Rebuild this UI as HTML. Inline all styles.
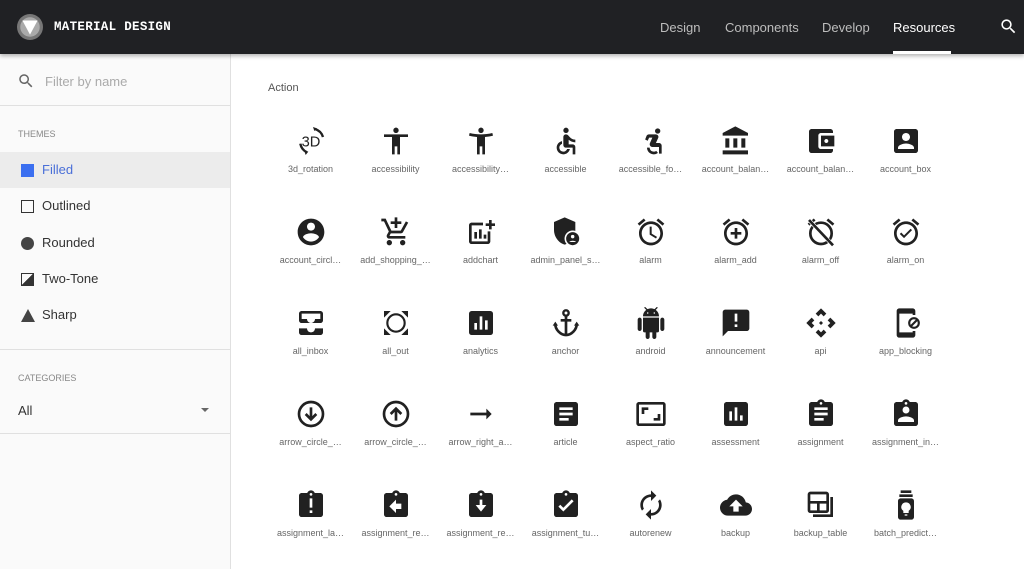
<!DOCTYPE html>
<html><head><meta charset="utf-8"><style>
*{margin:0;padding:0;box-sizing:border-box}
body{width:1024px;height:569px;overflow:hidden;background:#fff;font-family:"Liberation Sans",sans-serif;position:relative}
.hdr{position:absolute;left:0;top:0;width:1024px;height:54px;background:#202124;box-shadow:0 2px 4px rgba(0,0,0,.3);z-index:2}
.logo{position:absolute;left:17px;top:14px;width:26px;height:26px;border-radius:50%;background:#777}
.brand{position:absolute;left:54px;top:20px;color:#fff;font:bold 12.5px "Liberation Mono",monospace;letter-spacing:.3px}
.nav{position:absolute;top:20px;color:#bdbdbd;font-size:13px}
.side{position:absolute;left:0;top:54px;width:231px;height:515px;background:#fafafa;border-right:1px solid #e0e0e0}
.hr{position:absolute;left:0;width:230px;height:1px;background:#e0e0e0}
.sm{position:absolute;left:18px;font-size:9px;color:#888}
.it{position:absolute;left:0;width:230px;height:36px;font-size:13px;color:#333}
.it span{position:absolute;left:42px;top:10px}
.it i{position:absolute;left:21px;top:12px;width:13px;height:13px}
.cell{position:absolute;width:85px;text-align:center}
.cell svg{width:32px;height:32px;display:block;margin:0 auto}
.cell div{font-size:9px;color:#666;margin-top:7px;white-space:nowrap}
</style></head><body>
<div class="hdr">
<div class="logo"><svg width="26" height="26" viewBox="0 0 24 24"><circle cx="12" cy="12" r="9" fill="#aaa"/><path d="M5 6h14l-7 13z" fill="#fff"/></svg></div>
<div class="brand">MATERIAL DESIGN</div>
<div class="nav" style="left:660px">Design</div>
<div class="nav" style="left:725px">Components</div>
<div class="nav" style="left:822px">Develop</div>
<div class="nav" style="left:893px;color:#fff">Resources</div>
<div style="position:absolute;left:893px;top:51px;width:58px;height:3px;background:#fff"></div>
<svg style="position:absolute;left:999px;top:17px" width="19" height="19" viewBox="0 0 24 24"><path fill="#fff" d="M15.5 14h-.79l-.28-.27C15.41 12.59 16 11.11 16 9.5 16 5.91 13.09 3 9.5 3S3 5.91 3 9.5 5.91 16 9.5 16c1.61 0 3.090-.59 4.23-1.57l.27.28v.79l5 4.99L20.49 19l-4.99-5zm-6 0C7.01 14 5 11.99 5 9.5S7.01 5 9.5 5 14 7.01 14 9.5 11.99 14 9.5 14z"/></svg>
</div>
<div class="side">
<svg style="position:absolute;left:17px;top:18px" width="18" height="18" viewBox="0 0 24 24"><path fill="#666" d="M15.5 14h-.79l-.28-.27C15.41 12.59 16 11.11 16 9.5 16 5.91 13.09 3 9.5 3S3 5.91 3 9.5 5.91 16 9.5 16c1.61 0 3.09-.59 4.23-1.57l.27.28v.79l5 4.99L20.49 19l-4.99-5zm-6 0C7.01 14 5 11.99 5 9.5S7.01 5 9.5 5 14 7.01 14 9.5 11.99 14 9.5 14z"/></svg>
<div style="position:absolute;left:45px;top:20px;font-size:13px;color:#aaa">Filter by name</div>
<div class="hr" style="top:51px"></div>
<div class="sm" style="top:75px">THEMES</div>
<div class="it" style="top:98px;background:#ececec;color:#4a6fd8"><i style="background:#3b6ff0"></i><span>Filled</span></div>
<div class="it" style="top:134px"><i style="border:1.5px solid #333"></i><span>Outlined</span></div>
<div class="it" style="top:171px"><i style="background:#444;border-radius:50%"></i><span>Rounded</span></div>
<div class="it" style="top:207px"><i style="border:1.5px solid #333;background:linear-gradient(135deg,transparent 50%,#333 50%)"></i><span>Two-Tone</span></div>
<div class="it" style="top:243px"><i style="width:0;height:0;border-left:7px solid transparent;border-right:7px solid transparent;border-bottom:13px solid #444"></i><span>Sharp</span></div>
<div class="hr" style="top:295px"></div>
<div class="sm" style="top:319px">CATEGORIES</div>
<div style="position:absolute;left:18px;top:349px;font-size:13px;color:#333">All</div>
<div style="position:absolute;left:201px;top:354px;border-left:4px solid transparent;border-right:4px solid transparent;border-top:4px solid #666"></div>
<div class="hr" style="top:379px"></div>
</div>
<div style="position:absolute;left:268px;top:82px;font-size:11px;color:#555">Action</div>

<div class="cell" style="left:268px;top:125px"><svg viewBox="0 0 24 24"><path d="M15 3a9 9 0 0 1 6 6M4 14a9 9 0 0 0 5 6.5" fill="none" stroke="#212121" stroke-width="1.8"/><path d="M13.5 1.5l3 1-2 2zM8 22.5l2-2.5-3-.5z" fill="#212121"/><text x="12" y="16" font-size="11" text-anchor="middle" font-family="Liberation Sans" fill="#212121">3D</text></svg><div>3d_rotation</div></div>
<div class="cell" style="left:353px;top:125px"><svg viewBox="0 0 24 24"><path fill="#212121" d="M12 2c1.1 0 2 .9 2 2s-.9 2-2 2-2-.9-2-2 .9-2 2-2zm9 7h-6v13h-2v-6h-2v6H9V9H3V7h18v2z"/></svg><div>accessibility</div></div>
<div class="cell" style="left:438px;top:125px"><svg viewBox="0 0 24 24"><path fill="#212121" d="M20.5 6c-2.61.7-5.67 1-8.5 1s-5.890-.3-8.5-1L3 8c1.86.5 4 .83 6 1v13h2v-6h2v6h2V9c2-.17 4.14-.5 6-1l-.5-2zM12 6c1.1 0 2-.9 2-2s-.9-2-2-2-2 .9-2 2 .9 2 2 2z"/></svg><div>accessibility…</div></div>
<div class="cell" style="left:523px;top:125px"><svg viewBox="0 0 24 24"><circle cx="12" cy="4" r="2" fill="#212121"/><path fill="#212121" d="M19 13v-2c-1.54.02-3.09-.75-4.07-1.83l-1.29-1.43c-.17-.19-.38-.34-.61-.45H13c-.35-.2-.75-.3-1.19-.26C10.76 7.11 10 8.04 10 9.09V15c0 1.1.9 2 2 2h5v5h2v-5.5c0-1.1-.9-2-2-2h-3v-3.45c1.290 1.07 3.25 1.94 5 1.95zm-6.17 5c-.41 1.16-1.52 2-2.83 2-1.66 0-3-1.34-3-3 0-1.31.84-2.41 2-2.83V12.1c-2.28.46-4 2.48-4 4.9 0 2.76 2.24 5 5 5 2.42 0 4.44-1.72 4.9-4h-2.070z"/></svg><div>accessible</div></div>
<div class="cell" style="left:608px;top:125px"><svg viewBox="0 0 24 24"><circle cx="17" cy="4.5" r="2" fill="#212121"/><path fill="#212121" d="M14 20c-1.66 0-3-1.34-3-3h-2c0 2.76 2.24 5 5 5 1.2 0 2.3-.4 3.2-1.1l-1.3-1.5c-.5.4-1.2.6-1.9.6zM19 13.5h-3.3l1.7-3.8c.6-1.3-.4-2.7-1.8-2.7H10.5c-.8 0-1.5.4-1.8 1.1L7.6 10.9l1.9.9 1.1-2.3H13l-1.8 4.1c-.6 1.3.4 2.9 1.8 2.9h5v5h2v-6c0-1.1-.9-2-2-2z"/></svg><div>accessible_fo…</div></div>
<div class="cell" style="left:693px;top:125px"><svg viewBox="0 0 24 24"><path fill="#212121" d="M4 10v7h3v-7H4zm6 0v7h3v-7h-3zM2 22h19v-3H2v3zm14-12v7h3v-7h-3zm-4.5-9L2 6v2h19V6l-9.5-5z"/></svg><div>account_balan…</div></div>
<div class="cell" style="left:778px;top:125px"><svg viewBox="0 0 24 24"><path fill="#212121" d="M21 18v1c0 1.1-.9 2-2 2H5c-1.11 0-2-.9-2-2V5c0-1.1.89-2 2-2h14c1.1 0 2 .9 2 2v1h-9c-1.11 0-2 .9-2 2v8c0 1.1.89 2 2 2h9zm-9-2h10V8H12v8zm4-2.5c-.83 0-1.5-.67-1.5-1.5s.67-1.5 1.5-1.5 1.5.67 1.5 1.5-.67 1.5-1.5 1.5z"/></svg><div>account_balan…</div></div>
<div class="cell" style="left:863px;top:125px"><svg viewBox="0 0 24 24"><path fill="#212121" d="M3 5v14c0 1.1.89 2 2 2h14c1.1 0 2-.9 2-2V5c0-1.1-.9-2-2-2H5c-1.11 0-2 .9-2 2zm12 4c0 1.66-1.34 3-3 3s-3-1.34-3-3 1.34-3 3-3 3 1.34 3 3zm-9 8c0-2 4-3.1 6-3.1s6 1.1 6 3.1v1H6v-1z"/></svg><div>account_box</div></div>

<div class="cell" style="left:268px;top:216px"><svg viewBox="0 0 24 24"><path fill="#212121" d="M12 2C6.48 2 2 6.48 2 12s4.48 10 10 10 10-4.48 10-10S17.52 2 12 2zm0 3c1.66 0 3 1.34 3 3s-1.34 3-3 3-3-1.34-3-3 1.34-3 3-3zm0 14.2c-2.5 0-4.71-1.28-6-3.22.03-1.99 4-3.08 6-3.08 1.99 0 5.97 1.09 6 3.08-1.29 1.94-3.5 3.22-6 3.22z"/></svg><div>account_circl…</div></div>
<div class="cell" style="left:353px;top:216px"><svg viewBox="0 0 24 24"><path fill="#212121" d="M11 9h2V6h3V4h-3V1h-2v3H8v2h3v3zm-4 9c-1.1 0-1.99.9-1.99 2S5.9 22 7 22s2-.9 2-2-.9-2-2-2zm10 0c-1.1 0-1.99.9-1.99 2s.89 2 1.99 2 2-.9 2-2-.9-2-2-2zm-9.83-3.25l.03-.12.9-1.63h7.45c.75 0 1.41-.41 1.75-1.03l3.86-7.01L19.42 4h-.01l-1.1 2-2.76 5H8.53l-.13-.27L6.16 6l-.95-2-.94-2H1v2h2l3.6 7.59-1.35 2.45c-.16.28-.25.61-.25.96 0 1.1.9 2 2 2h12v-2H7.42c-.13 0-.25-.11-.25-.25z"/></svg><div>add_shopping_…</div></div>
<div class="cell" style="left:438px;top:216px"><svg viewBox="0 0 24 24"><path fill="#212121" d="M18 3h2v2.5h2.5v2H20V10h-2V7.5h-2.5v-2H18zM17 19H5V7h8.5V5H5c-1.1 0-2 .9-2 2v12c0 1.1.9 2 2 2h12c1.1 0 2-.9 2-2v-7.5h-2V19zM7 17h2v-5H7v5zm3.5 0h2V10h-2v7zm3.5 0h2v-3h-2v3z"/></svg><div>addchart</div></div>
<div class="cell" style="left:523px;top:216px"><svg viewBox="0 0 24 24"><path fill="#212121" d="M11 1L3 4.5v6c0 5 3.4 9.7 8 11 4.6-1.3 8-6 8-11v-6z"/><circle cx="17" cy="17" r="5.5" fill="#212121" stroke="#fff" stroke-width="1.2"/><circle cx="17" cy="15.5" r="1.3" fill="#fff"/><path d="M14.5 19.5c.5-1.3 4.5-1.3 5 0z" fill="#fff"/></svg><div>admin_panel_s…</div></div>
<div class="cell" style="left:608px;top:216px"><svg viewBox="0 0 24 24"><path fill="#212121" d="M22 5.72l-4.6-3.86-1.29 1.53 4.6 3.86L22 5.72zM7.88 3.39L6.6 1.86 2 5.71l1.29 1.53 4.59-3.85zM12.5 8H11v6l4.75 2.85.75-1.23-4-2.37V8zM12 4c-4.97 0-9 4.03-9 9s4.02 9 9 9c4.97 0 9-4.03 9-9s-4.03-9-9-9zm0 16c-3.87 0-7-3.13-7-7s3.13-7 7-7 7 3.13 7 7-3.13 7-7 7z"/></svg><div>alarm</div></div>
<div class="cell" style="left:693px;top:216px"><svg viewBox="0 0 24 24"><path fill="#212121" d="M22 5.72l-4.6-3.86-1.29 1.53 4.6 3.86L22 5.72zM7.88 3.39L6.6 1.86 2 5.71l1.29 1.53 4.59-3.85zM12 4c-4.97 0-9 4.03-9 9s4.02 9 9 9c4.97 0 9-4.03 9-9s-4.03-9-9-9zm0 16c-3.87 0-7-3.13-7-7s3.13-7 7-7 7 3.13 7 7-3.13 7-7 7zm1-11h-2v3H8v2h3v3h2v-3h3v-2h-3V9z"/></svg><div>alarm_add</div></div>
<div class="cell" style="left:778px;top:216px"><svg viewBox="0 0 24 24"><path fill="#212121" d="M22 5.72l-4.6-3.86-1.29 1.53 4.6 3.86L22 5.72zM7.88 3.39L6.6 1.86 2 5.71l1.29 1.53 4.59-3.85z"/><circle cx="12" cy="13" r="8" fill="none" stroke="#212121" stroke-width="2"/><path d="M3 3l18 19" stroke="#fff" stroke-width="3"/><path d="M3 3l18 19" stroke="#212121" stroke-width="2"/></svg><div>alarm_off</div></div>
<div class="cell" style="left:863px;top:216px"><svg viewBox="0 0 24 24"><path fill="#212121" d="M22 5.72l-4.6-3.86-1.29 1.53 4.6 3.86L22 5.72zM7.88 3.39L6.6 1.86 2 5.71l1.29 1.53 4.59-3.85zM12 4c-4.97 0-9 4.03-9 9s4.02 9 9 9c4.97 0 9-4.03 9-9s-4.03-9-9-9zm0 16c-3.87 0-7-3.13-7-7s3.13-7 7-7 7 3.13 7 7-3.13 7-7 7zm-1.46-5.47L8.41 12.4l-1.06 1.06 3.18 3.18 6-6-1.06-1.06-4.93 4.95z"/></svg><div>alarm_on</div></div>

<div class="cell" style="left:268px;top:307px"><svg viewBox="0 0 24 24"><path fill="#212121" d="M19 3H5c-1.1 0-2 .9-2 2v5c0 1.1.9 2 2 2h14c1.1 0 2-.9 2-2V5c0-1.1-.9-2-2-2zm0 6h-4c0 1.62-1.38 3-3 3s-3-1.38-3-3H5V5h14v4zm-4 7h6v3c0 1.1-.9 2-2 2H5c-1.1 0-2-.9-2-2v-3h6c0 1.66 1.34 3 3 3s3-1.34 3-3z"/></svg><div>all_inbox</div></div>
<div class="cell" style="left:353px;top:307px"><svg viewBox="0 0 24 24"><circle cx="12" cy="12" r="6.5" fill="none" stroke="#212121" stroke-width="1.6"/><path fill="#212121" d="M3 3h5L3 8zM21 3v5l-5-5zM3 21v-5l5 5zM21 21h-5l5-5z"/></svg><div>all_out</div></div>
<div class="cell" style="left:438px;top:307px"><svg viewBox="0 0 24 24"><rect x="3" y="3" width="18" height="18" rx="2" fill="#212121"/><path fill="#fff" d="M7 12h2v5H7zM11 7h2v10h-2zM15 10h2v7h-2z"/></svg><div>analytics</div></div>
<div class="cell" style="left:523px;top:307px"><svg viewBox="0 0 24 24"><circle cx="12" cy="4.5" r="2" fill="none" stroke="#212121" stroke-width="1.8"/><path d="M12 6.5V21M4 13c0 4 4 8 8 8s8-4 8-8M8 10h8" fill="none" stroke="#212121" stroke-width="2"/><path d="M2 14l2-3 2 3zM18 14l2-3 2 3z" fill="#212121"/></svg><div>anchor</div></div>
<div class="cell" style="left:608px;top:307px"><svg viewBox="0 0 24 24"><path fill="#212121" d="M6 18c0 .55.45 1 1 1h1v3.5c0 .83.67 1.5 1.5 1.5s1.5-.67 1.5-1.5V19h2v3.5c0 .83.67 1.5 1.5 1.5s1.5-.67 1.5-1.5V19h1c.55 0 1-.45 1-1V8H6v10zM3.5 8C2.67 8 2 8.67 2 9.5v7c0 .83.67 1.5 1.5 1.5S5 17.33 5 16.5v-7C5 8.67 4.33 8 3.5 8zm17 0c-.83 0-1.5.67-1.5 1.5v7c0 .83.67 1.5 1.5 1.5s1.5-.67 1.5-1.5v-7c0-.83-.67-1.5-1.5-1.5zm-4.97-5.84l1.3-1.3c.2-.2.2-.51 0-.71-.2-.2-.51-.2-.71 0l-1.48 1.48C13.85 1.23 12.95 1 12 1c-.96 0-1.86.23-2.66.63L7.85.15c-.2-.2-.51-.2-.71 0-.2.2-.2.51 0 .71l1.31 1.31C6.97 3.26 6 5.01 6 7h12c0-1.99-.97-3.75-2.47-4.84zM10 5H9V4h1v1zm5 0h-1V4h1v1z"/></svg><div>android</div></div>
<div class="cell" style="left:693px;top:307px"><svg viewBox="0 0 24 24"><path fill="#212121" d="M20 2H4c-1.1 0-1.99.9-1.99 2L2 22l4-4h14c1.1 0 2-.9 2-2V4c0-1.1-.9-2-2-2zm-7 9h-2V5h2v6zm0 4h-2v-2h2v2z"/></svg><div>announcement</div></div>
<div class="cell" style="left:778px;top:307px"><svg viewBox="0 0 24 24"><path fill="#212121" d="M12 1l4 4-2 2-2-2-2 2-2-2zM1 12l4-4 2 2-2 2 2 2-2 2zM23 12l-4 4-2-2 2-2-2-2 2-2zM12 23l-4-4 2-2 2 2 2-2 2 2zM12 10.5l1.5 1.5-1.5 1.5-1.5-1.5z"/></svg><div>api</div></div>
<div class="cell" style="left:863px;top:307px"><svg viewBox="0 0 24 24"><path fill="#212121" d="M17 1H7c-1.1 0-2 .9-2 2v18c0 1.1.9 2 2 2h10c1.1 0 2-.9 2-2v-3h-2v1H7V5h10v1h2V3c0-1.1-.9-2-2-2z"/><circle cx="18" cy="12" r="3.6" fill="none" stroke="#212121" stroke-width="1.6"/><path d="M15.5 14.5l5-5" stroke="#212121" stroke-width="1.6"/></svg><div>app_blocking</div></div>

<div class="cell" style="left:268px;top:398px"><svg viewBox="0 0 24 24"><circle cx="12" cy="12" r="9" fill="none" stroke="#212121" stroke-width="2"/><path d="M12 7v8M8 12l4 4 4-4" fill="none" stroke="#212121" stroke-width="2"/></svg><div>arrow_circle_…</div></div>
<div class="cell" style="left:353px;top:398px"><svg viewBox="0 0 24 24"><circle cx="12" cy="12" r="9" fill="none" stroke="#212121" stroke-width="2"/><path d="M12 17V9M8 12l4-4 4 4" fill="none" stroke="#212121" stroke-width="2"/></svg><div>arrow_circle_…</div></div>
<div class="cell" style="left:438px;top:398px"><svg viewBox="0 0 24 24"><path fill="#212121" d="M16.01 11H4v2h12.01v3L20 12l-3.99-4z"/></svg><div>arrow_right_a…</div></div>
<div class="cell" style="left:523px;top:398px"><svg viewBox="0 0 24 24"><path fill="#212121" d="M19 3H5c-1.1 0-2 .9-2 2v14c0 1.1.9 2 2 2h14c1.1 0 2-.9 2-2V5c0-1.1-.9-2-2-2zm-5 14H7v-2h7v2zm3-4H7v-2h10v2zm0-4H7V7h10v2z"/></svg><div>article</div></div>
<div class="cell" style="left:608px;top:398px"><svg viewBox="0 0 24 24"><path fill="#212121" d="M19 12h-2v3h-3v2h5v-5zM7 9h3V7H5v5h2V9zm14-6H3c-1.1 0-2 .9-2 2v14c0 1.1.9 2 2 2h18c1.1 0 2-.9 2-2V5c0-1.1-.9-2-2-2zm0 16.01H3V4.99h18v14.02z"/></svg><div>aspect_ratio</div></div>
<div class="cell" style="left:693px;top:398px"><svg viewBox="0 0 24 24"><path fill="#212121" d="M19 3H5c-1.1 0-2 .9-2 2v14c0 1.1.9 2 2 2h14c1.1 0 2-.9 2-2V5c0-1.1-.9-2-2-2zM9 17H7v-7h2v7zm4 0h-2V7h2v10zm4 0h-2v-4h2v4z"/></svg><div>assessment</div></div>
<div class="cell" style="left:778px;top:398px"><svg viewBox="0 0 24 24"><path fill="#212121" d="M19 3h-4.18C14.4 1.84 13.3 1 12 1c-1.3 0-2.4.84-2.82 2H5c-1.1 0-2 .9-2 2v14c0 1.1.9 2 2 2h14c1.1 0 2-.9 2-2V5c0-1.1-.9-2-2-2zm-7 0c.55 0 1 .45 1 1s-.45 1-1 1-1-.45-1-1 .45-1 1-1zm2 14H7v-2h7v2zm3-4H7v-2h10v2zm0-4H7V7h10v2z"/></svg><div>assignment</div></div>
<div class="cell" style="left:863px;top:398px"><svg viewBox="0 0 24 24"><path fill="#212121" d="M19 3h-4.18C14.4 1.84 13.3 1 12 1s-2.4.84-2.82 2H5c-1.1 0-2 .9-2 2v14c0 1.1.9 2 2 2h14c1.1 0 2-.9 2-2V5c0-1.1-.9-2-2-2z"/><circle cx="12" cy="4" r="1" fill="#fff"/><circle cx="12" cy="9" r="2.6" fill="#fff"/><path d="M6 18v-1.2c0-2 4-3 6-3s6 1 6 3V18z" fill="#fff"/></svg><div>assignment_in…</div></div>

<div class="cell" style="left:268px;top:489px"><svg viewBox="0 0 24 24"><path fill="#212121" d="M19 3h-4.18C14.4 1.84 13.3 1 12 1s-2.4.84-2.82 2H5c-1.1 0-2 .9-2 2v14c0 1.1.9 2 2 2h14c1.1 0 2-.9 2-2V5c0-1.1-.9-2-2-2z"/><circle cx="12" cy="4" r="1" fill="#fff"/><path fill="#fff" d="M11 7h2v7h-2zM11 16h2v2h-2z"/></svg><div>assignment_la…</div></div>
<div class="cell" style="left:353px;top:489px"><svg viewBox="0 0 24 24"><path fill="#212121" d="M19 3h-4.18C14.4 1.84 13.3 1 12 1s-2.4.84-2.82 2H5c-1.1 0-2 .9-2 2v14c0 1.1.9 2 2 2h14c1.1 0 2-.9 2-2V5c0-1.1-.9-2-2-2z"/><circle cx="12" cy="4" r="1" fill="#fff"/><path fill="#fff" d="M16 15h-4v3l-5-5 5-5v3h4z"/></svg><div>assignment_re…</div></div>
<div class="cell" style="left:438px;top:489px"><svg viewBox="0 0 24 24"><path fill="#212121" d="M19 3h-4.18C14.4 1.84 13.3 1 12 1s-2.4.84-2.82 2H5c-1.1 0-2 .9-2 2v14c0 1.1.9 2 2 2h14c1.1 0 2-.9 2-2V5c0-1.1-.9-2-2-2z"/><circle cx="12" cy="4" r="1" fill="#fff"/><path fill="#fff" d="M13 8v4h3l-4 5-4-5h3V8z"/></svg><div>assignment_re…</div></div>
<div class="cell" style="left:523px;top:489px"><svg viewBox="0 0 24 24"><path fill="#212121" d="M19 3h-4.18C14.4 1.84 13.3 1 12 1s-2.4.84-2.82 2H5c-1.1 0-2 .9-2 2v14c0 1.1.9 2 2 2h14c1.1 0 2-.9 2-2V5c0-1.1-.9-2-2-2z"/><circle cx="12" cy="4" r="1" fill="#fff"/><path d="M7 12.5l3 3 7-7" fill="none" stroke="#fff" stroke-width="2"/></svg><div>assignment_tu…</div></div>
<div class="cell" style="left:608px;top:489px"><svg viewBox="0 0 24 24"><path fill="#212121" d="M12 6v3l4-4-4-4v3c-4.42 0-8 3.58-8 8 0 1.57.46 3.03 1.24 4.26L6.7 14.8c-.45-.83-.7-1.79-.7-2.8 0-3.31 2.69-6 6-6zm6.76 1.74L17.3 9.2c.44.84.7 1.79.7 2.8 0 3.31-2.69 6-6 6v-3l-4 4 4 4v-3c4.42 0 8-3.58 8-8 0-1.57-.46-3.03-1.24-4.26z"/></svg><div>autorenew</div></div>
<div class="cell" style="left:693px;top:489px"><svg viewBox="0 0 24 24"><path fill="#212121" d="M19.35 10.04C18.67 6.59 15.64 4 12 4 9.11 4 6.6 5.64 5.35 8.04 2.34 8.36 0 10.91 0 14c0 3.31 2.69 6 6 6h13c2.76 0 5-2.24 5-5 0-2.64-2.05-4.78-4.65-4.960zM14 13v4h-4v-4H7l5-5 5 5h-3z"/></svg><div>backup</div></div>
<div class="cell" style="left:778px;top:489px"><svg viewBox="0 0 24 24"><path d="M20 6v14H6" fill="none" stroke="#212121" stroke-width="2"/><rect x="3" y="3" width="14" height="14" rx="1" fill="none" stroke="#212121" stroke-width="2"/><path d="M3 10h14M10 10v7" stroke="#212121" stroke-width="2"/></svg><div>backup_table</div></div>
<div class="cell" style="left:863px;top:489px"><svg viewBox="0 0 24 24"><path fill="#212121" d="M8 1h8v2H8zM7 4h10v2H7zM8 7h8c1.1 0 2 .9 2 2v12c0 1.1-.9 2-2 2H8c-1.1 0-2-.9-2-2V9c0-1.1.9-2 2-2z"/><path fill="#fff" d="M12 10a3.5 3.5 0 0 0-2 6.4V18h4v-1.6A3.5 3.5 0 0 0 12 10zM11 19h2v1h-2z"/></svg><div>batch_predict…</div></div>
</body></html>
